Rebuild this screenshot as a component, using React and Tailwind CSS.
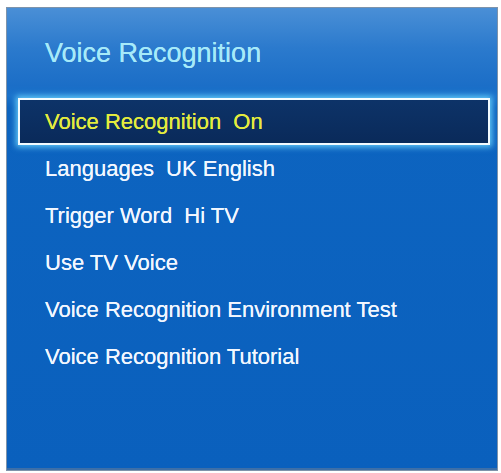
import React from "react";

const items = [
  { label: "Voice Recognition\u00a0\u00a0On", selected: true },
  { label: "Languages\u00a0\u00a0UK English" },
  { label: "Trigger Word\u00a0\u00a0Hi TV" },
  { label: "Use TV Voice" },
  { label: "Voice Recognition Environment Test" },
  { label: "Voice Recognition Tutorial" },
];

export default function App() {
  return (
    <div className="w-[501px] h-[473px] bg-white pl-[6px] pt-[7px] overflow-hidden" style={{ fontFamily: '"Liberation Sans", Arial, sans-serif' }}>
      <div className="w-[492px] h-[464px] border border-[#7e93aa] shadow-[inset_0_-2px_0_#3d6fa8] bg-[linear-gradient(to_bottom,#4a8fd6_0px,#2b7acd_40px,#1b6ec7_78px,#1a72cb_88px,#0d64c0_100px,#0a60bd_464px)] pt-[29px]">
        <div className="pl-[38px] text-[27px] leading-[32px] text-[#a6eaf9] [text-shadow:0_0_0.6px_currentColor]">Voice Recognition</div>
        <div className="mt-[29px] px-[11px] flex flex-col">
          {items.map((it) =>
            it.selected ? (
              <div
                key={it.label}
                className="h-[47px] w-[472px] flex items-center pl-[25px] border-2 border-[#f2fbff] bg-[linear-gradient(to_bottom,#0d3368,#0a2a5a)] shadow-[0_0_6px_2px_rgba(110,215,255,0.9)] text-[22px] leading-[26px] text-[#e4ec3e] [text-shadow:0_0_0.6px_currentColor]"
              >
                {it.label}
              </div>
            ) : (
              <div key={it.label} className="h-[47px] flex items-center pl-[27px] text-[22px] leading-[26px] text-[#f2f7ff] [text-shadow:0_0_0.6px_currentColor]">
                {it.label}
              </div>
            )
          )}
        </div>
      </div>
    </div>
  );
}
